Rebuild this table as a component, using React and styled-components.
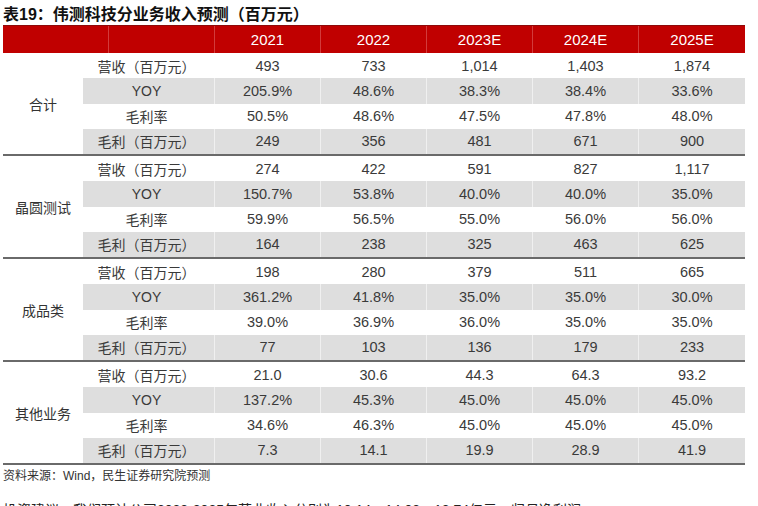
import styled, { createGlobalStyle } from "styled-components";

const GlobalStyle = createGlobalStyle`
  html, body {
    margin: 0;
    padding: 0;
    background: #ffffff;
    overflow: hidden;
  }
  body {
    font-family: "Liberation Sans", "Noto Sans CJK SC", sans-serif;
  }
`;

const years = ["2021", "2022", "2023E", "2024E", "2025E"];

const groups = [
  {
    name: "合计",
    rows: [
      ["营收（百万元）", "493", "733", "1,014", "1,403", "1,874"],
      ["YOY", "205.9%", "48.6%", "38.3%", "38.4%", "33.6%"],
      ["毛利率", "50.5%", "48.6%", "47.5%", "47.8%", "48.0%"],
      ["毛利（百万元）", "249", "356", "481", "671", "900"],
    ],
  },
  {
    name: "晶圆测试",
    rows: [
      ["营收（百万元）", "274", "422", "591", "827", "1,117"],
      ["YOY", "150.7%", "53.8%", "40.0%", "40.0%", "35.0%"],
      ["毛利率", "59.9%", "56.5%", "55.0%", "56.0%", "56.0%"],
      ["毛利（百万元）", "164", "238", "325", "463", "625"],
    ],
  },
  {
    name: "成品类",
    rows: [
      ["营收（百万元）", "198", "280", "379", "511", "665"],
      ["YOY", "361.2%", "41.8%", "35.0%", "35.0%", "30.0%"],
      ["毛利率", "39.0%", "36.9%", "36.0%", "35.0%", "35.0%"],
      ["毛利（百万元）", "77", "103", "136", "179", "233"],
    ],
  },
  {
    name: "其他业务",
    rows: [
      ["营收（百万元）", "21.0", "30.6", "44.3", "64.3", "93.2"],
      ["YOY", "137.2%", "45.3%", "45.0%", "45.0%", "45.0%"],
      ["毛利率", "34.6%", "46.3%", "45.0%", "45.0%", "45.0%"],
      ["毛利（百万元）", "7.3", "14.1", "19.9", "28.9", "41.9"],
    ],
  },
];

export default function App() {
  return (
    <Page>
      <GlobalStyle />
      <Title>表19：伟测科技分业务收入预测（百万元）</Title>
      <Table>
        <HeaderRow>
          <HeaderCell />
          <HeaderCell />
          {years.map((y) => (
            <HeaderCell key={y}>{y}</HeaderCell>
          ))}
        </HeaderRow>
        {groups.map((group) => (
          <Group key={group.name}>
            <GroupLabel>{group.name}</GroupLabel>
            <GroupRows>
              {group.rows.map((row, i) => (
                <Row key={i} $shade={i % 2 === 1}>
                  {row.map((cell, j) => (
                    <Cell key={j}>{cell}</Cell>
                  ))}
                </Row>
              ))}
            </GroupRows>
          </Group>
        ))}
      </Table>
      <Source>资料来源：Wind，民生证券研究院预测</Source>
      <NextText>
        投资建议：我们预计公司2023-2025年营业收入分别为10.14、14.03、18.74亿元，归母净利润
      </NextText>
    </Page>
  );
}

const Page = styled.div`
  width: 758px;
  height: 506px;
  overflow: hidden;
  padding-left: 3px;
  box-sizing: border-box;
`;

const Title = styled.div`
  font-family: "Liberation Sans", "Noto Sans CJK SC", sans-serif;
  font-weight: 700;
  font-size: 16px;
  line-height: 20px;
  padding-top: 5px;
  color: #111;
  white-space: nowrap;
`;

const Table = styled.div`
  width: 742px;
  display: flex;
  flex-direction: column;
`;

const HeaderRow = styled.div`
  display: grid;
  grid-template-columns: repeat(7, 106px);
  height: 28px;
  background: #c00000;
  border-top: 1px solid #8e0a0a;
  box-sizing: border-box;
`;

const HeaderCell = styled.div`
  display: flex;
  align-items: center;
  justify-content: center;
  color: #ffffff;
  font-size: 15px;
  border-right: 1px solid #d23b3b;
  &:last-child {
    border-right: none;
  }
`;

const Group = styled.div`
  display: grid;
  grid-template-columns: 80px 1fr;
  border-bottom: 2px solid #6a6a6a;
`;

const GroupLabel = styled.div`
  display: flex;
  align-items: center;
  justify-content: center;
  font-size: 14px;
  color: #333;
`;

const GroupRows = styled.div`
  display: flex;
  flex-direction: column;
`;

const Row = styled.div`
  display: grid;
  grid-template-columns: 132px repeat(5, 106px);
  height: 25.25px;
  background: ${(p) => (p.$shade ? "#dedede" : "#ffffff")};
`;

const Cell = styled.div`
  display: flex;
  align-items: center;
  justify-content: center;
  font-size: 14.5px;
  color: #3a3a3a;
  white-space: nowrap;
  border-right: 1px solid rgba(255, 255, 255, 0.55);
  &:first-child {
    font-size: 14px;
    padding-right: 4px;
  }
  &:last-child {
    border-right: none;
  }
`;

const Source = styled.div`
  font-size: 12px;
  line-height: 18px;
  padding-top: 2px;
  color: #333;
  white-space: nowrap;
`;

const NextText = styled.div`
  margin-top: 15px;
  font-size: 14px;
  line-height: 20px;
  color: #222;
  white-space: nowrap;
`;
